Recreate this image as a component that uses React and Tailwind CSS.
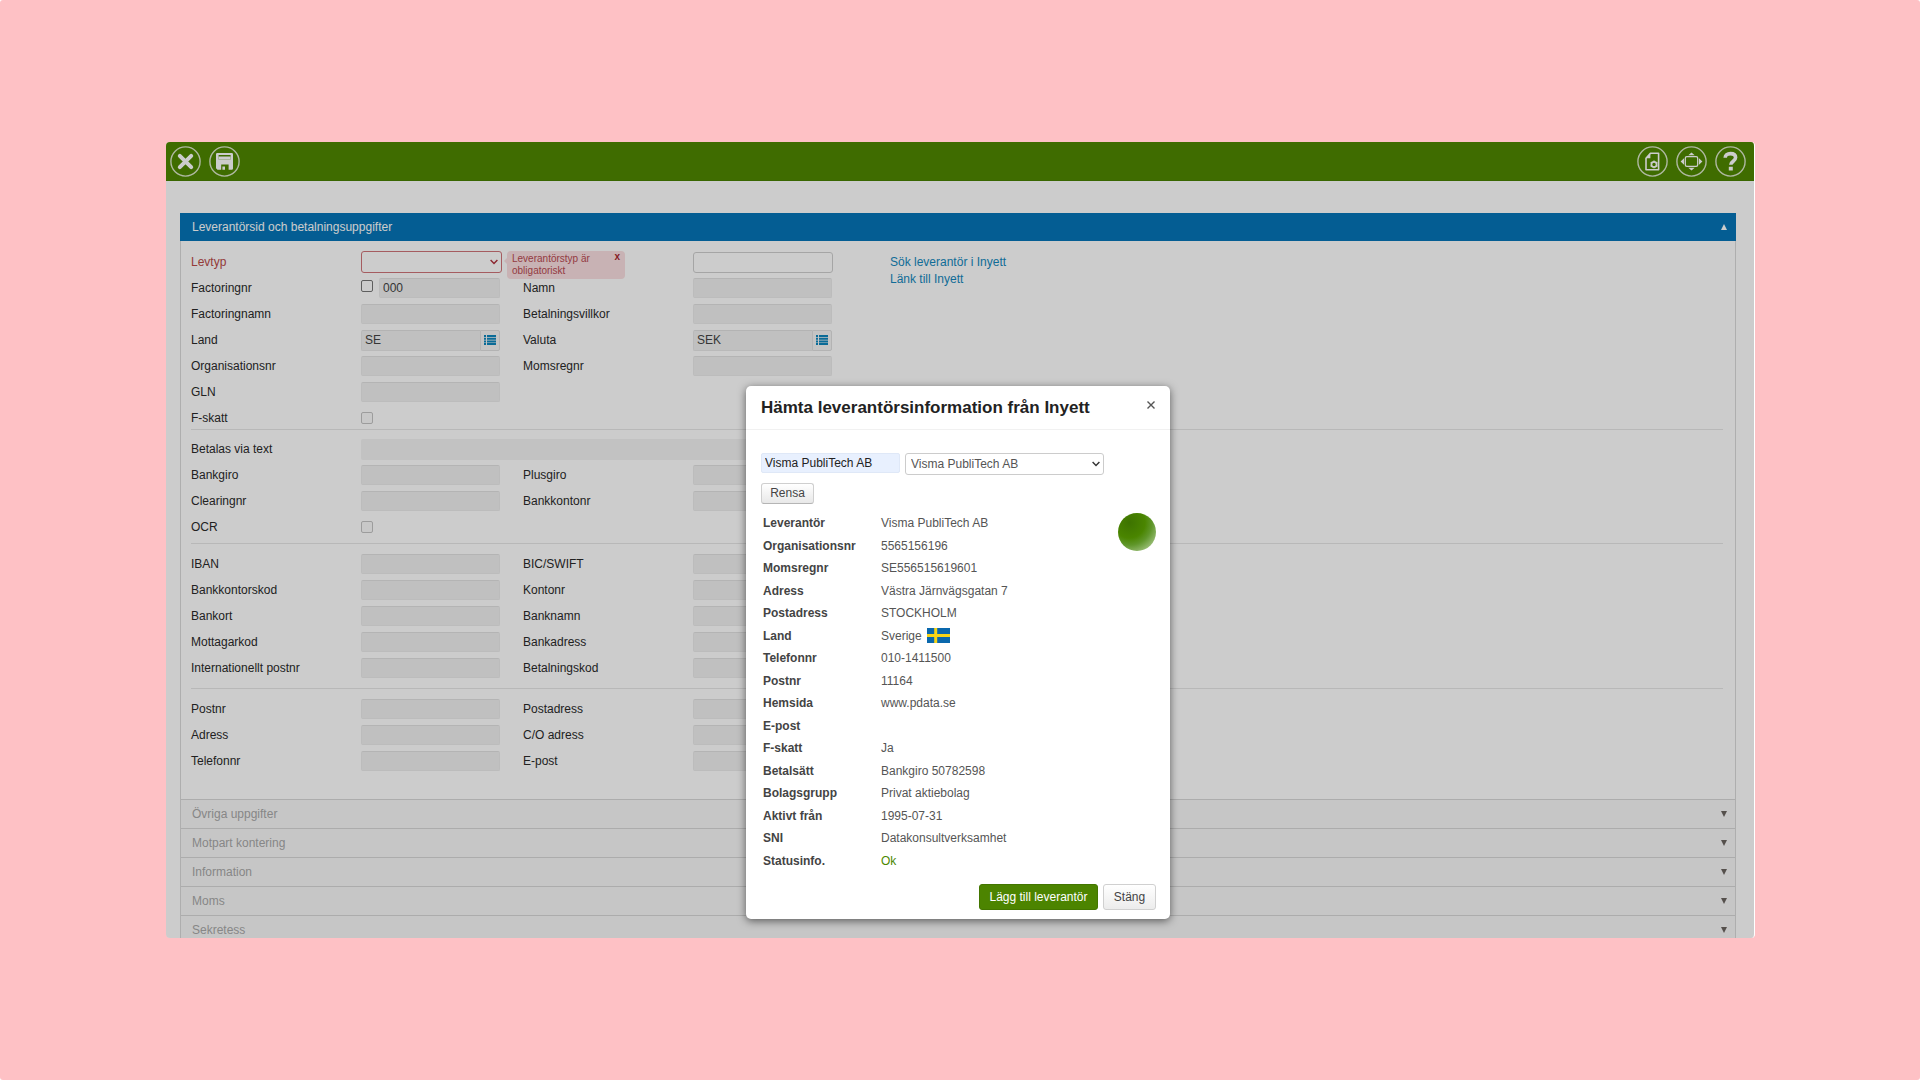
import React from "react";

const inputClass =
  "h-5 w-[139px] rounded-[2px] border border-[#ebebeb] border-t-[#e2e2e2] bg-[#f0f0f0] px-1 text-[12px] text-[#444]";

const bankFields = [
  ["Bankgiro", "Plusgiro"],
  ["Clearingnr", "Bankkontonr"],
];

const foreignFields = [
  ["IBAN", "BIC/SWIFT"],
  ["Bankkontorskod", "Kontonr"],
  ["Bankort", "Banknamn"],
  ["Mottagarkod", "Bankadress"],
  ["Internationellt postnr", "Betalningskod"],
];

const addressFields = [
  ["Postnr", "Postadress"],
  ["Adress", "C/O adress"],
  ["Telefonnr", "E-post"],
];

const closedPanels = ["Övriga uppgifter", "Motpart kontering", "Information", "Moms", "Sekretess"];

const supplierInfo = [
  { label: "Leverantör", value: "Visma PubliTech AB" },
  { label: "Organisationsnr", value: "5565156196" },
  { label: "Momsregnr", value: "SE556515619601" },
  { label: "Adress", value: "Västra Järnvägsgatan 7" },
  { label: "Postadress", value: "STOCKHOLM" },
  { label: "Land", value: "Sverige", flag: true },
  { label: "Telefonnr", value: "010-1411500" },
  { label: "Postnr", value: "11164" },
  { label: "Hemsida", value: "www.pdata.se" },
  { label: "E-post", value: "" },
  { label: "F-skatt", value: "Ja" },
  { label: "Betalsätt", value: "Bankgiro 50782598" },
  { label: "Bolagsgrupp", value: "Privat aktiebolag" },
  { label: "Aktivt från", value: "1995-07-31" },
  { label: "SNI", value: "Datakonsultverksamhet" },
  { label: "Statusinfo.", value: "Ok", ok: true },
];

const toId = (label) => label.toLowerCase().replace(/[^a-zåäö]+/g, "-");

const ToolbarButton = ({ label, children }) => (
  <button type="button" aria-label={label} className="h-[31px] w-[31px]">
    <svg viewBox="0 0 31 31" className="h-[31px] w-[31px]" fill="none">
      <circle cx="15.5" cy="15.5" r="14.6" stroke="#dbe6c9" strokeWidth="1.4" />
      {children}
    </svg>
  </button>
);

const Toolbar = () => (
  <header className="flex h-[39px] items-center justify-between border-b border-[#488000] bg-[#4f8800] pl-1 pr-2">
    <div className="flex gap-2">
      <ToolbarButton label="Stäng fönster">
        <path d="M9.8 9.8 21.2 21.2M21.2 9.8 9.8 21.2" stroke="#fff" strokeWidth="4" strokeLinecap="round" />
      </ToolbarButton>
      <ToolbarButton label="Spara">
        <path
          fillRule="evenodd"
          fill="#fff"
          d="M8.3 7h14.4a1.3 1.3 0 0 1 1.3 1.3v14.1a1.3 1.3 0 0 1-1.3 1.3H8.5L7 22.3V8.3A1.3 1.3 0 0 1 8.3 7ZM9.6 9v4.6h12V9ZM12.2 18.4v5.3h7.4v-5.3Z"
        />
        <path d="M9.6 10.6h12v3h-12ZM13.4 20.6H16v3.1h-2.6Z" fill="#fff" />
      </ToolbarButton>
    </div>
    <div className="flex gap-2">
      <ToolbarButton label="Inställningar">
        <path d="M13.4 7.2h8.2v16.6H9V12.2Z" stroke="#fff" strokeWidth="1.6" strokeLinejoin="round" />
        <path d="M9 12.2h4.4v-5Z" fill="#fff" />
        <circle cx="17" cy="18.4" r="2.6" stroke="#fff" strokeWidth="1.7" />
        <path
          d="M17 14.6v1.4M17 20.8v1.4M13.6 16.5l1.2.6M19.2 19.7l1.2.6M13.6 20.3l1.2-.6M19.2 17.1l1.2-.6"
          stroke="#fff"
          strokeWidth="1.3"
        />
      </ToolbarButton>
      <ToolbarButton label="Helskärm">
        <rect x="9.3" y="10.6" width="12.4" height="9.8" rx="1.6" stroke="#fff" strokeWidth="1.3" />
        <path
          d="m15.5 6.4 3.2 2.9h-6.4ZM15.5 24.6l3.2-2.9h-6.4ZM4.6 15.5 8 12.2v6.6ZM26.4 15.5 23 12.2v6.6Z"
          fill="#fff"
        />
      </ToolbarButton>
      <ToolbarButton label="Hjälp">
        <path
          d="M10.2 11.8c0-2.6 2.2-4.2 5.2-4.2 3.2 0 5.2 1.6 5.2 4 0 3.6-4.8 3.6-4.8 7.2"
          stroke="#fff"
          strokeWidth="3.6"
        />
        <path d="M13.8 20.8h4v3.8h-4Z" fill="#fff" />
      </ToolbarButton>
    </div>
  </header>
);

const Chevron = ({ className }) => (
  <svg viewBox="0 0 8 6" className={className} fill="none">
    <path d="m.6 .9 3.4 3.6L7.4 .9" stroke="currentColor" strokeWidth="1.4" />
  </svg>
);

const Row = ({ children }) => (
  <div className="grid h-[26px] grid-cols-[170px_162px_170px_auto] items-center justify-start">{children}</div>
);

const Field = ({ label }) => (
  <>
    <label htmlFor={toId(label)}>{label}</label>
    <input id={toId(label)} type="text" readOnly className={inputClass} />
  </>
);

const LookupField = ({ label, value }) => (
  <>
    <label htmlFor={toId(label)}>{label}</label>
    <div className="flex h-[21px] w-[139px]">
      <input
        id={toId(label)}
        type="text"
        readOnly
        value={value}
        className="w-[119px] rounded-l-[2px] border border-r-0 border-[#e8e8e8] border-t-[#e0e0e0] bg-[#f0f0f0] px-[3px] text-[12px] text-[#444]"
      />
      <button
        type="button"
        aria-label={`Välj ${label}`}
        className="flex w-5 items-center justify-center rounded-r-[2px] border border-[#e0e0e0] bg-[#f5f5f5] text-[#0d86bd]"
      >
        <svg viewBox="0 0 12 10" className="h-[10px] w-3" fill="currentColor">
          <path d="M0 0h2v2H0ZM3 0h9v2H3ZM0 2.7h2v2H0ZM3 2.7h9v2H3ZM0 5.4h2v2H0ZM3 5.4h9v2H3ZM0 8h2v2H0ZM3 8h9v2H3Z" />
        </svg>
      </button>
    </div>
  </>
);

const CheckField = ({ label }) => (
  <>
    <label htmlFor={toId(label)}>{label}</label>
    <input
      id={toId(label)}
      type="checkbox"
      disabled
      className="h-3 w-3 appearance-none rounded-[2px] border border-[#c4c4c4] bg-[#fafafa]"
    />
  </>
);

const FieldRows = ({ fields }) =>
  fields.map(([left, right]) => (
    <Row key={left}>
      <Field label={left} />
      <Field label={right} />
    </Row>
  ));

const SupplierTypeField = () => (
  <>
    <label htmlFor="levtyp" className="text-[#b94a48]">
      Levtyp
    </label>
    <div className="relative w-[141px] text-[#b0303c]">
      <select
        id="levtyp"
        className="block h-[22px] w-full appearance-none rounded-[3px] border border-[#cf7479] bg-white px-1 text-[12px]"
      />
      <Chevron className="pointer-events-none absolute right-1 top-2 h-[6px] w-2" />
      <div
        role="alert"
        className="absolute left-[146px] top-0 z-10 flex w-[118px] justify-between rounded-[4px] bg-[#fadfe1] px-[5px] py-[2px] text-[10px] leading-[12px] text-[#b94a52]"
      >
        <span className="absolute -left-[3px] top-[6px] border-y-4 border-r-4 border-y-transparent border-r-[#fadfe1]" />
        <span>
          Leverantörstyp är
          <br />
          obligatoriskt
        </span>
        <button type="button" aria-label="Dölj" className="h-2 font-bold leading-[8px] text-[#a82630]">
          x
        </button>
      </div>
    </div>
  </>
);

const SupplierForm = () => (
  <div className="border-x border-[#dadada] pl-[10px] pr-3 text-[12px] text-[#2a2a2a]">
    <div className="flex h-[188px] border-b border-[#e6e6e6] pt-[7px]">
      <div className="w-[699px]">
        <Row>
          <SupplierTypeField />
          <input
            type="text"
            aria-label="Leverantörsnummer"
            className="col-start-4 h-[21px] w-[140px] rounded-[3px] border border-[#cfcfcf] bg-white px-1 text-[12px]"
          />
        </Row>
        <Row>
          <label htmlFor="factoringnr">Factoringnr</label>
          <div className="flex w-[139px] items-start justify-between">
            <input
              type="checkbox"
              aria-label="Factoring"
              className="mt-[2px] h-3 w-3 appearance-none rounded-[2px] border border-[#767676] bg-white"
            />
            <input
              id="factoringnr"
              type="text"
              readOnly
              value="000"
              className="h-5 w-[121px] rounded-[2px] border border-[#ebebeb] border-t-[#e2e2e2] bg-[#f0f0f0] px-[3px] text-[12px] text-[#444]"
            />
          </div>
          <Field label="Namn" />
        </Row>
        <Row>
          <Field label="Factoringnamn" />
          <Field label="Betalningsvillkor" />
        </Row>
        <Row>
          <LookupField label="Land" value="SE" />
          <LookupField label="Valuta" value="SEK" />
        </Row>
        <Row>
          <Field label="Organisationsnr" />
          <Field label="Momsregnr" />
        </Row>
        <Row>
          <Field label="GLN" />
        </Row>
        <Row>
          <CheckField label="F-skatt" />
        </Row>
      </div>
      <div className="flex flex-col items-start pt-[5px] leading-[17px] text-[#1488bd]">
        <a href="#sok">Sök leverantör i Inyett</a>
        <a href="#lank">Länk till Inyett</a>
      </div>
    </div>

    <div className="border-b border-[#e6e6e6] pb-[3px] pt-[6px]">
      <div className="grid h-[26px] grid-cols-[170px_471px] items-center">
        <label htmlFor="betalas-via-text">Betalas via text</label>
        <input id="betalas-via-text" type="text" readOnly className="h-[21px] rounded-[2px] bg-[#f3f3f3] px-1" />
      </div>
      <FieldRows fields={bankFields} />
      <Row>
        <CheckField label="OCR" />
      </Row>
    </div>

    <div className="border-b border-[#e6e6e6] py-[7px]">
      <FieldRows fields={foreignFields} />
    </div>

    <div className="pb-[25px] pt-[7px]">
      <FieldRows fields={addressFields} />
    </div>
  </div>
);

const SwedishFlag = () => (
  <svg viewBox="0 0 23 15" className="h-[15px] w-[23px]" role="img" aria-label="Sveriges flagga">
    <rect width="23" height="15" fill="#0a68ad" />
    <path d="M7.2 0h3v15h-3ZM0 6h23v3H0Z" fill="#f7d417" />
  </svg>
);

const InyettDialog = () => (
  <div
    role="dialog"
    aria-labelledby="inyett-title"
    className="w-[424px] self-start rounded-[5px] bg-white text-[12px] text-[#555] shadow-[0_2px_8px_rgba(0,0,0,0.55)]"
  >
    <div className="flex h-11 items-center justify-between border-b border-[#f1f1f1] pl-[15px] pr-[14px]">
      <h2 id="inyett-title" className="text-[17px] font-bold text-[#222]">
        Hämta leverantörsinformation från Inyett
      </h2>
      <button type="button" aria-label="Stäng dialog" className="mb-[6px] flex h-[10px] w-[10px] items-center justify-center">
        <svg viewBox="0 0 8 8" className="h-2 w-2" fill="none">
          <path d="M.5.5 7.5 7.5M7.5.5.5 7.5" stroke="#555" strokeWidth="1.4" />
        </svg>
      </button>
    </div>

    <div className="pb-[9px] pl-[15px] pr-[14px] pt-[23px]">
      <div className="flex gap-[5px]">
        <input
          type="text"
          aria-label="Sök leverantör"
          defaultValue="Visma PubliTech AB"
          className="h-5 w-[139px] rounded-[2px] border border-[#dfe8f7] bg-[#e8f0fe] px-[3px] text-[12px] text-[#222]"
        />
        <div className="relative w-[199px]">
          <select
            aria-label="Leverantör"
            className="block h-[22px] w-full appearance-none rounded-[3px] border border-[#ccc] bg-white px-[5px] text-[12px]"
          >
            <option>Visma PubliTech AB</option>
          </select>
          <Chevron className="pointer-events-none absolute right-1 top-2 h-[6px] w-2 text-[#333]" />
        </div>
      </div>
      <button
        type="button"
        className="mt-2 block h-[21px] w-[53px] rounded-[3px] border border-[#cfcfcf] border-b-[#b5b5b5] bg-linear-to-b from-white to-[#e8e8e8] leading-[17px] text-[#444]"
      >
        Rensa
      </button>

      <div className="mt-2 flex items-start justify-between">
        <table className="leading-[18px]">
          <tbody>
            {supplierInfo.map((item) => (
              <tr key={item.label} className="odd:h-[22px] even:h-[23px]">
                <th scope="row" className="w-[120px] p-0 pl-[2px] text-left font-bold text-[#444]">
                  {item.label}
                </th>
                <td className="p-0">
                  <span className={item.ok ? "text-[#4c8800]" : "flex items-center gap-[5px]"}>
                    {item.value}
                    {item.flag && <SwedishFlag />}
                  </span>
                </td>
              </tr>
            ))}
          </tbody>
        </table>
        <span className="mt-px h-[38px] w-[38px] rounded-full bg-[radial-gradient(circle_at_30%_25%,#3d7300_0%,#4a8500_40%,#5f962a_58%,#8ab363_75%,#b0cc92_90%)]" />
      </div>

      <div className="mt-3 flex justify-end gap-[5px]">
        <button type="button" className="h-[26px] w-[119px] rounded-[3px] border border-[#437600] bg-[#4c8400] text-white">
          Lägg till leverantör
        </button>
        <button
          type="button"
          className="h-[26px] w-[53px] rounded-[3px] border border-[#d0d0d0] bg-linear-to-b from-white to-[#ececec] text-[#444]"
        >
          Stäng
        </button>
      </div>
    </div>
  </div>
);

const App = () => {
  return (
    <div className="flex h-screen rounded-[3px] bg-[#fec1c5] px-[166px] py-[142px] font-['Liberation_Sans',Arial,sans-serif]">
      <div className="relative -mr-px flex-1 overflow-hidden rounded-[4px] border-r border-white bg-white">
        <Toolbar />
        <main className="pl-[14px] pr-[18px] pt-8">
          <button
            type="button"
            className="flex h-7 w-full items-center justify-between bg-[#0575b8] pl-3 pr-[9px] text-[12px] text-white"
          >
            Leverantörsid och betalningsuppgifter
            <svg viewBox="0 0 6 6" className="h-[6px] w-[6px]" fill="currentColor">
              <path d="M3 0 6 6H0Z" />
            </svg>
          </button>
          <div className="h-px border-x border-[#dadada]" />
          <SupplierForm />
          <div className="border-x border-[#dadada]">
            {closedPanels.map((title) => (
              <button
                key={title}
                type="button"
                className="flex h-[29px] w-full items-center justify-between border-t border-[#d8d8d8] bg-[#f8f8f8] pl-[11px] pr-2 text-[12px] text-[#a9a9a9]"
              >
                {title}
                <svg viewBox="0 0 6 6" className="h-[6px] w-[6px] text-[#6b6460]" fill="currentColor">
                  <path d="M0 0h6L3 6Z" />
                </svg>
              </button>
            ))}
          </div>
        </main>

        <div className="absolute inset-0 z-20 flex justify-center bg-black/20 pr-1 pt-[244px]">
          <InyettDialog />
        </div>
      </div>
    </div>
  );
};

export default App;
